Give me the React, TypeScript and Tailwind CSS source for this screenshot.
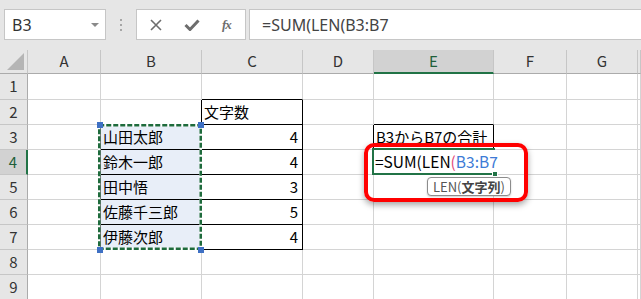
import React from "react";

const JP = "font-['Noto_Sans_CJK_JP','Noto_Sans',sans-serif]";

const COLS = ["", "A", "B", "C", "D", "E", "F", "G", ""];

const COL_START = ["col-start-1", "col-start-2", "col-start-3", "col-start-4", "col-start-5", "col-start-6", "col-start-7", "col-start-8", "col-start-9"];
const ROW_START = ["row-start-1", "row-start-2", "row-start-3", "row-start-4", "row-start-5", "row-start-6", "row-start-7", "row-start-8", "row-start-9", "row-start-10"];

const cells: Record<string, string> = {
  C2: "文字数",
  B3: "山田太郎",
  B4: "鈴木一郎",
  B5: "田中悟",
  B6: "佐藤千三郎",
  B7: "伊藤次郎",
  C3: "4",
  C4: "4",
  C5: "3",
  C6: "5",
  C7: "4",
  E3: "B3からB7の合計",
};

const table = new Set(["B3", "B4", "B5", "B6", "B7", "C2", "C3", "C4", "C5", "C6", "C7", "E3"]);

const key = (r: number, c: number) => `${COLS[c]}${r}`;

function Cell({ r, c }: { r: number; c: number }) {
  const k = key(r, c);
  const blackBottom = table.has(k) || table.has(key(r + 1, c));
  const blackRight = table.has(k) || table.has(key(r, c + 1));
  const inSel = c === 2 && r >= 3 && r <= 7;
  const isNum = c === 3 && r >= 3;
  const text = cells[k];
  return (
    <div
      className={`${COL_START[c]} ${ROW_START[r]} border-r border-b flex items-center overflow-visible whitespace-nowrap text-[15px] text-black ${
        blackBottom ? "border-b-black" : "border-b-[#d4d4d4]"
      } ${blackRight ? "border-r-black" : "border-r-[#d4d4d4]"} ${inSel ? "bg-[#e8eef8]" : "bg-white"} ${
        isNum ? "justify-end pr-[4px]" : "pl-[2px]"
      }`}
    >
      {text}
    </div>
  );
}

function ColHeader({ c }: { c: number }) {
  if (c === 0) {
    return (
      <div className="col-start-1 row-start-1 border-r border-b border-r-[#c6c6c6] border-b-[#ababab] bg-[#e6e6e6] flex items-end justify-end pr-[3px] pb-[3px]">
        <div className="w-0 h-0 border-l-[17px] border-l-transparent border-b-[17px] border-b-[#b5b5b5]" />
      </div>
    );
  }
  const active = c === 5;
  return (
    <div
      className={`${COL_START[c]} row-start-1 flex items-center justify-center text-[15px] border-r border-r-[#c6c6c6] ${
        active ? "bg-[#d2d2d2] text-[#1f5f3a] border-b-2 border-b-[#217346]" : "bg-[#e6e6e6] text-[#333] border-b border-b-[#ababab]"
      }`}
    >
      {COLS[c]}
    </div>
  );
}

function RowHeader({ r }: { r: number }) {
  const active = r === 4;
  return (
    <div
      className={`col-start-1 ${ROW_START[r]} flex items-center justify-center text-[15px] border-b border-b-[#c6c6c6] ${
        active ? "bg-[#d2d2d2] text-[#1f5f3a] border-r-2 border-r-[#217346]" : "bg-[#e6e6e6] text-[#333] border-r border-r-[#ababab]"
      }`}
    >
      {r}
    </div>
  );
}

function TopBar() {
  return (
    <div className="h-[50px] bg-[#e6e6e6] flex items-start pt-[9px] font-['Noto_Sans',sans-serif]">
      <div className="ml-[4px] w-[102px] h-[31px] border border-[#c6c6c6] bg-white flex items-center pl-[7px] pr-[6px] justify-between">
        <span className="text-[16px] text-[#333]">B3</span>
        <div className="w-0 h-0 border-l-[4px] border-r-[4px] border-t-[4px] border-l-transparent border-r-transparent border-t-[#8a8a8a]" />
      </div>
      <div className="w-[30px] h-[31px] flex flex-col items-center justify-center gap-[3px]">
        <div className="w-[2px] h-[2px] bg-[#a6a6a6]" />
        <div className="w-[2px] h-[2px] bg-[#a6a6a6]" />
        <div className="w-[2px] h-[2px] bg-[#a6a6a6]" />
      </div>
      <div className="w-[110px] h-[31px] border border-[#c6c6c6] bg-white flex items-center pl-[13px] text-[#6d6d6d]">
        <svg width="12" height="12" viewBox="0 0 12 12" className="shrink-0">
          <path d="M1 1 L11 11 M11 1 L1 11" stroke="#6d6d6d" strokeWidth="1.6" fill="none" />
        </svg>
        <svg width="16" height="12" viewBox="0 0 16 12" className="ml-[22px] shrink-0">
          <path d="M1.5 6 L6 10.5 L14.5 1.5" stroke="#6d6d6d" strokeWidth="3" fill="none" />
        </svg>
        <span className="ml-[22px] text-[13px] italic font-['Liberation_Serif',serif] font-bold tracking-[-1px] text-[#6d6d6d]">
          fx
        </span>
      </div>
      <div className="ml-[3px] flex-1 h-[31px] border border-r-0 border-[#c6c6c6] bg-white flex items-center pl-[12px]">
        <span className="text-[16px] text-[#444]">=SUM(LEN(B3:B7</span>
      </div>
    </div>
  );
}

export default function App() {
  const rows = [1, 2, 3, 4, 5, 6, 7, 8, 9];
  return (
    <div className="w-[641px] h-[299px] overflow-hidden bg-white">
      <TopBar />
      <div className={`relative ${JP}`}>
        <div className="grid grid-cols-[28px_73px_101px_101px_71px_120px_73px_71px_1fr] grid-rows-[24px_26px_repeat(8,25px)]">
          {COLS.map((_, c) => (
            <ColHeader key={`h${c}`} c={c} />
          ))}
          {rows.map((r) =>
            COLS.map((_, c) => (c === 0 ? <RowHeader key={`r${r}`} r={r} /> : <Cell key={`${r}-${c}`} r={r} c={c} />))
          )}

          {/* copy marquee around B3:B7 */}
          <div className="col-start-3 row-start-4 row-span-5 relative -ml-[3px] -mt-[1px] -mr-[1px] pointer-events-none">
            <svg width="104" height="126" className="absolute left-0 top-0">
              <rect x="1.25" y="1.25" width="101.5" height="123.5" fill="none" stroke="#ffffff" strokeWidth="2.5" />
              <rect x="1.25" y="1.25" width="101.5" height="123.5" fill="none" stroke="#1e6b3c" strokeWidth="2.5" strokeDasharray="5 2" />
            </svg>
            <div className="absolute left-[-1px] top-[-2px] w-[6px] h-[6px] bg-[#3e70c4]" />
            <div className="absolute left-[100px] top-[-2px] w-[6px] h-[6px] bg-[#3e70c4]" />
            <div className="absolute left-[-1px] top-[123px] w-[6px] h-[6px] bg-[#3e70c4]" />
            <div className="absolute left-[100px] top-[123px] w-[6px] h-[6px] bg-[#3e70c4]" />
          </div>

          {/* active cell E4 in edit mode */}
          <div className="col-start-6 row-start-5 relative -ml-[2px] -mt-[2px] -mr-[1px] border-2 border-r-0 border-[#217346] bg-white flex items-center pl-[1px] whitespace-nowrap text-[15.5px] text-black">
            <span className="relative z-10">
              =SUM(LEN<span className="text-[#e2457b]">(</span>
              <span className="text-[#3d7bd6]">B3:B7</span>
            </span>
            <div className="absolute right-[-3px] bottom-[-4px] w-[6px] h-[6px] bg-[#217346] border border-white" />
          </div>
        </div>

        {/* annotation */}
        <div className="absolute left-[364px] top-[93px] w-[164px] h-[59px] border-4 border-[#ff0000] rounded-[10px] shadow-[0_3px_6px_rgba(0,0,0,0.35)] pointer-events-none" />
        <div className="absolute left-[427px] top-[127px] h-[19px] px-[5px] flex items-center border border-[#8c8c8c] rounded-[4px] bg-white text-[13px] text-[#555] shadow-[0_1px_2px_rgba(0,0,0,0.2)]">
          LEN(<b className="font-bold text-[#444]">文字列</b>)
        </div>
      </div>
    </div>
  );
}
